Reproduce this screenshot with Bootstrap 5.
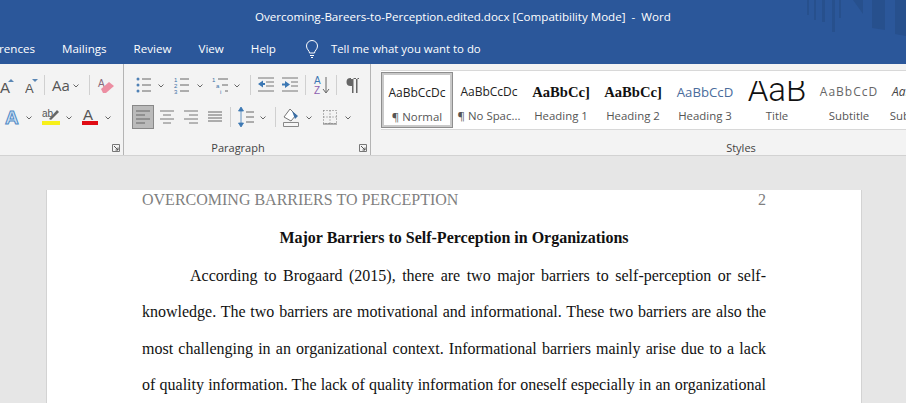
<!DOCTYPE html>
<html lang="en">
<head>
    <meta charset="UTF-8">
    <meta name="viewport" content="width=device-width, initial-scale=1.0">
    <title>Overcoming-Bareers-to-Perception.edited.docx - Word</title>
    <link href="https://cdn.jsdelivr.net/npm/bootstrap@5.3.3/dist/css/bootstrap.min.css" rel="stylesheet">
    <style>
        html, body { height: 403px; overflow: hidden; }
        body { background: #e6e6e6; font-family: "Open Sans", "Noto Sans", sans-serif; }

        .word-head { background: #2b579a; color: #fff; height: 64px; position: relative; }
        .title-line { height: 33px; font-size: 11.6px; padding-left: 255px; white-space: pre; }
        .tab-line { height: 31px; font-size: 11.6px; }
        .tab-line span { white-space: nowrap; }
        .tab-cut { width: 62px; overflow: hidden; padding-right: 27px; flex: none; }
        .tab-cut span { flex: none; }
        .tab-item { margin-right: 27px; }
        .tab-bulb { margin-left: 2px; }
        .tell-me { margin-left: 12px; font-size: 11.4px; }
        .head-art { position: absolute; right: 0; top: 0; }

        .ribbon { background: #f3f3f3; height: 92px; border-bottom: 1px solid #d2d2d2; color: #444; overflow: hidden; }
        .rb-group { position: relative; height: 91px; flex: none; border-right: 1px solid #b4b4b4; }
        .rb-font { width: 124px; }
        .rb-para { width: 247px; }
        .rb-styles { width: 740px; border-right: 0; }
        .rb-row { height: 24px; margin-top: 8px; }
        .rb-row:first-child { margin-top: 9px; }
        .rb-row svg { flex: none; display: block; }
        .rb-sep { width: 1px; height: 20px; background: #d0d0d0; flex: none; }
        .rb-label { position: absolute; left: 0; bottom: 0; font-size: 11px; color: #444; line-height: 15px; text-align: center; }
        .rb-para .rb-label { width: 228px; }
        .rb-styles .rb-label { width: 740px; }
        .launcher { position: absolute; bottom: 3px; right: 3px; }

        .gallery { margin: 6px 0 0 10px; height: 60px; background: #fff; border-top: 1px solid #d8d8d8; border-bottom: 1px solid #d8d8d8; overflow: hidden; }
        .style-tile { width: 72px; height: 56px; margin-top: 1px; flex: none; text-align: center; overflow: hidden; }
        .style-on { border: 1px solid #8e8e8e; box-shadow: inset 0 0 0 2px #c9c9c9; }
        .style-demo { height: 36px; line-height: 40px; font-size: 12px; color: #222; white-space: nowrap; overflow: hidden; padding: 0 5px; }
        .style-name { font-size: 11.4px; color: #555; line-height: 16px; white-space: nowrap; }
        .demo-h { font-family: "Liberation Serif", serif; font-weight: 700; font-size: 14.6px; color: #111; }
        .demo-h3 { color: #4a6c9c; font-size: 13.2px; }
        .demo-title { font-family: Roboto, sans-serif; font-weight: 300; font-size: 33px; line-height: 18px; height: 27px; margin-top: 9px; color: #111; }
        .demo-sub { color: #666; letter-spacing: 1px; }
        .demo-subtle { color: #444; font-style: italic; text-align: left; padding-left: 7px; }

        .doc-sheet { width: 814px; height: 240px; margin: 34px 0 0 47px; background: #fff; box-shadow: -1px 0 0 #d3d3d3, 1px 0 0 #d3d3d3; padding: 0 95px; font-family: "Liberation Serif", serif; font-size: 16px; color: #111; overflow: hidden; }
        .doc-header { height: 19px; line-height: 19px; color: #7f7f7f; }
        .doc-heading { margin-top: 19px; line-height: 19px; text-align: center; font-weight: 700; }
        .doc-line { height: 36.4px; line-height: 36.4px; text-align: justify; text-align-last: justify; white-space: nowrap; }
        .doc-first { margin-top: 11px; padding-left: 48px; }
    </style>
</head>
<body>

    <svg width="0" height="0" class="position-absolute">
        <defs>
            <symbol id="chev" viewBox="0 0 6 4"><path d="M.5.5 3 3 5.500.5" fill="none" stroke="#666" stroke-width="1"/></symbol>
            <symbol id="launch" viewBox="0 0 8 8"><path d="M.5.500h7v7h-7z" fill="none" stroke="#777"/><path d="M2 2l4 4M6 3.500V6H3.500" fill="none" stroke="#555"/></symbol>
            <symbol id="lines" viewBox="0 0 14 12"><path d="M0 1h14M0 4h14M0 7h14M0 10h14" stroke="#666" fill="none"/></symbol>
        </defs>
    </svg>

    <!-- Barra de titulo y pestañas -->
    <header class="word-head">
        <svg class="head-art" width="101" height="36" fill="#27508d">
            <path d="M2 0h2v15H2zM9 0h2v20H9zM17 0h3v22h-3zM27 0h3v32h-3zM34 0h2v18h-2zM48 0l10 14V0zM67 0h13v30l-13-2zM90 0h11v36l-11-2z"/>
        </svg>
        <div class="title-line d-flex align-items-center">Overcoming-Bareers-to-Perception.edited.docx [Compatibility Mode]  -  Word</div>
        <nav class="tab-line d-flex align-items-center">
            <span class="tab-cut d-flex justify-content-end"><span>References</span></span>
            <span class="tab-item">Mailings</span>
            <span class="tab-item">Review</span>
            <span class="tab-item">View</span>
            <span class="tab-item">Help</span>
            <svg class="tab-bulb" width="14" height="18" viewBox="0 0 14 18" fill="none" stroke="#fff">
                <path d="M4.500 13c0-2.500-3-3.500-3-7a5.500 5.500 0 0 1 11 0c0 3.500-3 4.500-3 7zM5 15.500h4M6 17.500h2"/>
            </svg>
            <span class="tell-me">Tell me what you want to do</span>
        </nav>
    </header>

    <!-- Cinta -->
    <section class="ribbon d-flex">
        <div class="rb-group rb-font">
            <div class="rb-row d-flex align-items-center">
                <svg width="25" height="24" viewBox="0 0 25 24">
                    <text x="0" y="20" font-family="Liberation Sans" font-size="15" fill="#555">A</text><path d="M8 9l3-3 3 3z" fill="#5b87b5"/>
                </svg>
                <svg width="19" height="24" viewBox="0 0 19 24">
                    <text x="0" y="20" font-family="Liberation Sans" font-size="13" fill="#555">A</text><path d="M7 6h6l-3 3z" fill="#5b87b5"/>
                </svg>
                <span class="rb-sep"></span>
                <svg width="44" height="24" viewBox="0 0 44 24">
                    <text x="7" y="18" font-family="Open Sans" font-size="15" fill="#555">Aa</text><use href="#chev" x="28" y="11" width="6" height="4"/>
                </svg>
                <span class="rb-sep"></span>
                <svg width="33" height="24" viewBox="0 0 33 24">
                    <text x="8" y="14" font-family="Liberation Sans" font-size="10" fill="#8a6a7a">A</text><path d="M11 16l8-7 5 4-8 7h-3z" fill="#ec8ea2"/>
                </svg>
            </div>
            <div class="rb-row d-flex align-items-center">
                <svg width="38" height="24" viewBox="0 0 38 24">
                    <text x="5" y="19" font-family="Liberation Sans" font-weight="700" font-size="19" fill="#cfe2f3" stroke="#4f8ac6" stroke-width="1">A</text><use href="#chev" x="26" y="11" width="6" height="4"/>
                </svg>
                <svg width="40" height="24" viewBox="0 0 40 24">
                    <text x="4" y="12" font-family="Liberation Sans" font-size="10" fill="#555">ab</text><path d="M11 14l8-9 2 2-8 8z" fill="#666"/><path d="M4 16h18v4H4z" fill="#f7f01a"/><use href="#chev" x="28" y="11" width="6" height="4"/>
                </svg>
                <svg width="45" height="24" viewBox="0 0 45 24">
                    <text x="5" y="15" font-family="Liberation Sans" font-size="15" fill="#555">A</text><path d="M4 16h16v4H4z" fill="#e00b14"/><use href="#chev" x="27" y="11" width="6" height="4"/>
                </svg>
            </div>
            <svg class="launcher" width="8" height="8"><use href="#launch"/></svg>
        </div>

        <div class="rb-group rb-para">
            <div class="rb-row d-flex align-items-center">
                <svg width="44" height="24" viewBox="0 0 44 24">
                    <path d="M18 6h9M18 12h9M18 18h9" stroke="#666"/><circle cx="14" cy="6" r="1.500" fill="#4f81b5"/><circle cx="14" cy="12" r="1.500" fill="#4f81b5"/><circle cx="14" cy="18" r="1.500" fill="#4f81b5"/><use href="#chev" x="34" y="11" width="6" height="4"/>
                </svg>
                <svg width="38" height="24" viewBox="0 0 38 24">
                    <path d="M12 6h9M12 12h9M12 18h9" stroke="#666"/><text x="6" y="9" font-size="6" fill="#3c6fa5" font-family="Liberation Sans">1</text><text x="6" y="15" font-size="6" fill="#3c6fa5" font-family="Liberation Sans">2</text><text x="6" y="21" font-size="6" fill="#3c6fa5" font-family="Liberation Sans">3</text><use href="#chev" x="29" y="11" width="6" height="4"/>
                </svg>
                <svg width="44" height="24" viewBox="0 0 44 24">
                    <path d="M12 6h10M16 12h6M19 18h3" stroke="#666"/><text x="6" y="9" font-size="6" fill="#3c6fa5" font-family="Liberation Sans">1</text><text x="10" y="15" font-size="6" fill="#3c6fa5" font-family="Liberation Sans">a</text><text x="14" y="21" font-size="6" fill="#3c6fa5" font-family="Liberation Sans">i</text><use href="#chev" x="28" y="11" width="6" height="4"/>
                </svg>
                <span class="rb-sep"></span>
                <svg width="27" height="24" viewBox="0 0 27 24">
                    <path d="M7 5h16M15 9h8M15 13h8M7 18h16" stroke="#777"/><path d="M7 11l5-3.500v2.500h2v2h-2v2.500z" fill="#3c78b4"/>
                </svg>
                <svg width="27" height="24" viewBox="0 0 27 24">
                    <path d="M4 5h16M13 9h7M13 13h7M4 18h16" stroke="#777"/><path d="M12 11.500l-5-3.500v2.500H4v2h3v2.500z" fill="#3c78b4"/>
                </svg>
                <span class="rb-sep"></span>
                <svg width="30" height="24" viewBox="0 0 30 24">
                    <text x="8" y="11" font-size="10" font-family="Liberation Sans" fill="#3c78b4">A</text><text x="8" y="21" font-size="10" font-family="Liberation Sans" fill="#8d5fb0">Z</text><path d="M20 4v15M17 16l3 4 3-4" fill="none" stroke="#666"/>
                </svg>
                <span class="rb-sep"></span>
                <svg width="33" height="24" viewBox="0 0 33 24">
                    <path d="M15 5h-1.500a4 4 0 0 0 0 8H15zM15 5v15h1.500V5zM19 5v15h1.500V5zM14 5h8v1h-8z" fill="#666"/>
                </svg>
            </div>
            <div class="rb-row d-flex align-items-center">
                <svg width="32" height="24" viewBox="0 0 32 24">
                    <rect x="8.500" y=".5" width="21" height="23" fill="#bababa" stroke="#888"/><path d="M12 6h14M12 10h9M12 14h14M12 18h9" stroke="#666"/>
                </svg>
                <svg width="24" height="24" viewBox="0 0 24 24">
                    <path d="M4 6h14M7 10h8M4 14h14M7 18h8" stroke="#777"/>
                </svg>
                <svg width="24" height="24" viewBox="0 0 24 24">
                    <path d="M4 6h14M9 10h9M4 14h14M9 18h9" stroke="#777"/>
                </svg>
                <svg width="26" height="24" viewBox="0 0 26 24">
                    <use href="#lines" x="4" y="6" width="14" height="12"/>
                </svg>
                <span class="rb-sep"></span>
                <svg width="44" height="24" viewBox="0 0 44 24">
                    <path d="M10 3v18M7.500 6 10 2l2.500 4zM7.500 18 10 22l2.500-4z" fill="#3c78b4" stroke="#3c78b4" stroke-width=".8"/><path d="M15 7h8M15 12h8M15 17h8" stroke="#666"/><use href="#chev" x="29" y="11" width="6" height="4"/>
                </svg>
                <span class="rb-sep"></span>
                <svg width="42" height="24" viewBox="0 0 42 24">
                    <path d="M8 12l6-8 6 6-5 6z" fill="#fff" stroke="#777"/><path d="M16 6l6 5-3 3z" fill="#3c6fa5"/><path d="M7.500 17.500h15v4h-15z" fill="#f6f6f6" stroke="#888"/><use href="#chev" x="30" y="11" width="6" height="4"/>
                </svg>
                <svg width="52" height="24" viewBox="0 0 52 24">
                    <path d="M5.500 5.500h13v13h-13zM12 5.500v13M5.500 12h13" fill="none" stroke="#777" stroke-dasharray="1 2"/><path d="M5 19h14" stroke="#777"/><use href="#chev" x="27" y="11" width="6" height="4"/>
                </svg>
            </div>
            <div class="rb-label">Paragraph</div>
            <svg class="launcher" width="8" height="8"><use href="#launch"/></svg>
        </div>

        <div class="rb-group rb-styles">
            <div class="gallery d-flex">
                <div class="style-tile style-on"><div class="style-demo">AaBbCcDc</div><div class="style-name">¶ Normal</div></div>
                <div class="style-tile"><div class="style-demo">AaBbCcDc</div><div class="style-name">¶ No Spac...</div></div>
                <div class="style-tile"><div class="style-demo demo-h">AaBbCc]</div><div class="style-name">Heading 1</div></div>
                <div class="style-tile"><div class="style-demo demo-h">AaBbCc]</div><div class="style-name">Heading 2</div></div>
                <div class="style-tile"><div class="style-demo demo-h3">AaBbCcD</div><div class="style-name">Heading 3</div></div>
                <div class="style-tile"><div class="style-demo demo-title">AaB</div><div class="style-name">Title</div></div>
                <div class="style-tile"><div class="style-demo demo-sub">AaBbCcD</div><div class="style-name">Subtitle</div></div>
                <div class="style-tile"><div class="style-demo demo-subtle">AaBbCcD</div><div class="style-name">Subtle Em...</div></div>
            </div>
            <div class="rb-label">Styles</div>
        </div>
    </section>

    <!-- Documento -->
    <main class="doc-sheet">
        <div class="doc-header d-flex justify-content-between">
            <span>OVERCOMING BARRIERS TO PERCEPTION</span>
            <span>2</span>
        </div>
        <div class="doc-heading">Major Barriers to Self-Perception in Organizations</div>
        <div class="doc-line doc-first">According to Brogaard (2015), there are two major barriers to self-perception or self-</div>
        <div class="doc-line">knowledge. The two barriers are motivational and informational. These two barriers are also the</div>
        <div class="doc-line">most challenging in an organizational context. Informational barriers mainly arise due to a lack</div>
        <div class="doc-line">of quality information. The lack of quality information for oneself especially in an organizational</div>
    </main>

    <script src="https://cdn.jsdelivr.net/npm/bootstrap@5.3.3/dist/js/bootstrap.bundle.min.js"></script>
</body>
</html>
